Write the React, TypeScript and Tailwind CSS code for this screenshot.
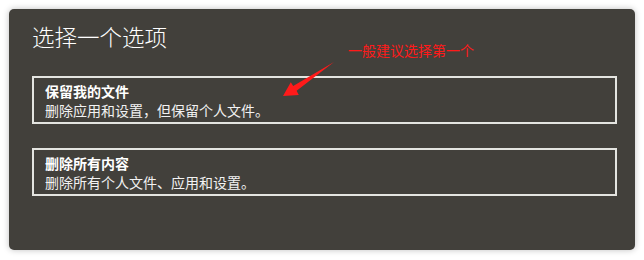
const options = [
  { title: '保留我的文件', desc: '删除应用和设置，但保留个人文件。' },
  { title: '删除所有内容', desc: '删除所有个人文件、应用和设置。' },
];

export default function App() {
  return (
    <div
      className="w-[644px] h-[260px] bg-white pt-[9px] pl-[9px]"
      style={{ fontFamily: '"Noto Sans CJK SC", "Noto Sans", sans-serif' }}
    >
      <div className="relative w-[626px] h-[241px] rounded-[5px] bg-[#42403b] shadow-[0_0_6px_rgba(0,0,0,0.25)] pt-[12px] pl-[23px] pr-[18px]">
        <h1 className="text-[22.5px] leading-[30px] font-light text-white">选择一个选项</h1>

        <div className="mt-[25px] flex flex-col gap-[24px]">
          {options.map((o) => (
            <div key={o.title} className="border-2 border-[#e4e4e0] pl-[11px] pt-[4px] pb-[2px]">
              <div className="text-[14px] leading-[19px] font-bold text-white">{o.title}</div>
              <div className="text-[14px] leading-[19px] text-[#f2f2f2]">{o.desc}</div>
            </div>
          ))}
        </div>

        <div className="absolute left-[339px] top-[31px] text-[14px] leading-[20px] text-[#ff1a1a]">
          一般建议选择第一个
        </div>
        <svg className="absolute left-0 top-0" width="626" height="241" viewBox="9 9 626 241">
          <polygon
            points="334,62 296.6,90.8 298.8,95 283,96 290.8,82.3 293.2,86"
            fill="#ff1a1a"
          />
        </svg>
      </div>
    </div>
  );
}
